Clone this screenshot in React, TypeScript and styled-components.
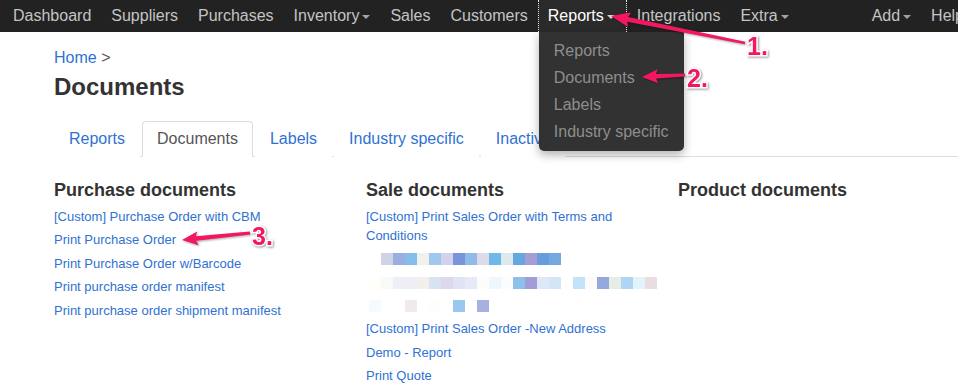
import React from 'react';
import styled, { createGlobalStyle } from 'styled-components';

const GlobalStyle = createGlobalStyle`
  html, body {
    margin: 0;
    padding: 0;
    background: #fff;
    overflow: hidden;
  }
  body {
    font-family: "Liberation Sans", Arial, sans-serif;
    color: #333;
  }
  #root {
    position: relative;
    width: 958px;
    height: 389px;
    overflow: hidden;
  }
`;

const LINK = '#2f72d2';
const PINK = '#f2175f';

type Pt = [number, number];

// tapered annotation arrow: wide near the head, thin at the tail
const arrowPoints = (
  tip: Pt,
  tail: Pt,
  headLen: number,
  headHalf: number,
  shaftHead: number,
  shaftTail: number,
) => {
  const dx = tail[0] - tip[0];
  const dy = tail[1] - tip[1];
  const len = Math.sqrt(dx * dx + dy * dy);
  const ux = dx / len;
  const uy = dy / len;
  const nx = -uy;
  const ny = ux;
  const bx = tip[0] + ux * headLen;
  const by = tip[1] + uy * headLen;
  const pts: Pt[] = [
    tip,
    [bx + ux * 2 + nx * headHalf, by + uy * 2 + ny * headHalf],
    [bx + nx * (shaftHead / 2), by + ny * (shaftHead / 2)],
    [tail[0] + nx * (shaftTail / 2), tail[1] + ny * (shaftTail / 2)],
    [tail[0] - nx * (shaftTail / 2), tail[1] - ny * (shaftTail / 2)],
    [bx - nx * (shaftHead / 2), by - ny * (shaftHead / 2)],
    [bx + ux * 2 - nx * headHalf, by + uy * 2 - ny * headHalf],
  ];
  return pts.map((p) => `${p[0].toFixed(1)},${p[1].toFixed(1)}`).join(' ');
};

const leftNav = [
  { label: 'Dashboard' },
  { label: 'Suppliers' },
  { label: 'Purchases' },
  { label: 'Inventory', caret: true },
  { label: 'Sales' },
  { label: 'Customers' },
  { label: 'Reports', caret: true, active: true },
  { label: 'Integrations' },
  { label: 'Extra', caret: true },
];

const rightNav = [
  { label: 'Add', caret: true },
  { label: 'Help' },
];

const reportMenu = ['Reports', 'Documents', 'Labels', 'Industry specific'];

const tabs = ['Reports', 'Documents', 'Labels', 'Industry specific', 'Inactive'];

const purchaseDocs = [
  '[Custom] Purchase Order with CBM',
  'Print Purchase Order',
  'Print Purchase Order w/Barcode',
  'Print purchase order manifest',
  'Print purchase order shipment manifest',
];

// pixelated (redacted) entries in the sale list
const blurRows: string[][] = [
  ['transparent', '#d0d3e6', '#9aaee2', '#84bde9', '#f1f0ea', '#a0c8ee', '#d2d2ee', '#7895d9', '#90bbe9', '#dcdce9', '#6fb8ea', '#dde9ec', '#64a8e3', '#a89cd5', '#679ddd', '#76a7df'],
  ['#fffef8', '#f8faf8', '#eeeef8', '#efedf6', '#f1f0ea', '#d7e2f3', '#dfd8ea', '#e0e3f3', '#e5eaf6', '#fcfcfa', '#eef7fb', '#fafcfe', '#8dc1ec', '#a49cd6', '#dfe8f6', '#d3e6f5', 'transparent', '#c3e3f8', '#fff9f9', '#95a8dc', '#e6ece6', '#acd6f4', '#e3f3fb', '#eadde1'],
  ['#f5faff', 'transparent', 'transparent', '#f0eaee', 'transparent', '#fcfefe', 'transparent', '#9ac6f2', 'transparent', '#a8b0e2'],
];

const App: React.FC = () => {
  return (
    <>
      <GlobalStyle />
      <Navbar>
        <NavInner>
          {leftNav.map((item) => (
            <NavItem key={item.label} $active={!!item.active}>
              {item.label}
              {item.caret && <Caret />}
              {item.active && (
                <DropMenu>
                  {reportMenu.map((m) => (
                    <DropItem key={m}>{m}</DropItem>
                  ))}
                </DropMenu>
              )}
            </NavItem>
          ))}
          <NavRight>
            {rightNav.map((item) => (
              <NavItem key={item.label} $active={false}>
                {item.label}
                {item.caret && <Caret />}
              </NavItem>
            ))}
          </NavRight>
        </NavInner>
      </Navbar>

      <Main>
        <Breadcrumb>
          <CrumbLink>Home</CrumbLink> &gt;
        </Breadcrumb>
        <Title>Documents</Title>

        <TabList>
          {tabs.map((t) => (
            <Tab key={t} $active={t === 'Documents'}>
              {t}
            </Tab>
          ))}
        </TabList>

        <Columns>
          <Column>
            <SectionTitle>Purchase documents</SectionTitle>
            <LinkList>
              {purchaseDocs.map((d) => (
                <DocLink key={d}>{d}</DocLink>
              ))}
            </LinkList>
          </Column>
          <Column>
            <SectionTitle>Sale documents</SectionTitle>
            <LinkList>
              <DocLink>[Custom] Print Sales Order with Terms and Conditions</DocLink>
              {blurRows.map((row, i) => (
                <MosaicRow key={i}>
                  {row.map((c, j) => (
                    <MosaicCell key={j} $color={c} />
                  ))}
                </MosaicRow>
              ))}
              <DocLink>[Custom] Print Sales Order -New Address</DocLink>
              <DocLink>Demo - Report</DocLink>
              <DocLink>Print Quote</DocLink>
            </LinkList>
          </Column>
          <Column>
            <SectionTitle>Product documents</SectionTitle>
          </Column>
        </Columns>
      </Main>

      <Overlay width="958" height="389" viewBox="0 0 958 389">
        <g fill={PINK} style={{ filter: 'drop-shadow(1px 1px 1px rgba(0,0,0,0.35))' }}>
          <polygon points={arrowPoints([611, 16], [745, 43], 17, 7.5, 5, 2.5)} />
          <polygon points={arrowPoints([642, 77], [685, 75], 14, 7, 4.5, 3)} />
          <polygon points={arrowPoints([182, 240], [250, 233], 14, 7, 4.5, 3)} />
        </g>
        <Marker x="747" y="55">1.</Marker>
        <Marker x="687" y="87">2.</Marker>
        <Marker x="252" y="245">3.</Marker>
      </Overlay>
    </>
  );
};

const Navbar = styled.nav`
  height: 32px;
  background: #222;
  position: relative;
  z-index: 5;
`;

const NavInner = styled.div`
  display: flex;
  width: 974px;
  height: 32px;
  padding-left: 3px;
  box-sizing: border-box;
`;

const NavRight = styled.div`
  display: flex;
  margin-left: auto;
`;

const NavItem = styled.div<{ $active: boolean }>`
  position: relative;
  display: flex;
  align-items: center;
  height: 32px;
  font-size: 16px;
  line-height: 32px;
  white-space: nowrap;
  color: ${(p) => (p.$active ? '#fff' : '#c4c4c4')};
  background: ${(p) => (p.$active ? '#2a2a2a' : 'transparent')};
  border-left: ${(p) => (p.$active ? '1px dotted #e8e8e8' : 'none')};
  border-right: ${(p) => (p.$active ? '1px dotted #e8e8e8' : 'none')};
  padding: ${(p) => (p.$active ? '0 11px 0 9px' : '0 10px')};
`;

const Caret = styled.span`
  display: inline-block;
  width: 0;
  height: 0;
  margin-left: 3px;
  margin-top: 1px;
  border-top: 4px solid currentColor;
  border-left: 4px solid transparent;
  border-right: 4px solid transparent;
  opacity: 0.8;
`;

const DropMenu = styled.div`
  position: absolute;
  top: 32px;
  left: 0;
  width: 145px;
  padding: 5px 0 6px;
  background: #323232;
  border-radius: 0 0 5px 5px;
  box-shadow: 0 4px 10px rgba(0, 0, 0, 0.3);
`;

const DropItem = styled.div`
  padding: 0 15px;
  line-height: 27px;
  font-size: 16px;
  color: #8e8e8e;
`;

const Main = styled.main`
  padding: 15px 0 0 54px;
`;

const Breadcrumb = styled.div`
  font-size: 16px;
  line-height: 22px;
  color: #555;
`;

const CrumbLink = styled.a`
  color: ${LINK};
  text-decoration: none;
`;

const Title = styled.h1`
  margin: 5px 0 0;
  font-size: 24px;
  line-height: 26px;
  font-weight: bold;
  color: #333;
`;

const TabList = styled.div`
  display: flex;
  margin-top: 21px;
  border-bottom: 1px solid #ddd;
`;

const Tab = styled.a<{ $active: boolean }>`
  display: block;
  margin-right: 2px;
  margin-bottom: -1px;
  padding: 6px 14px;
  font-size: 16px;
  line-height: 22px;
  white-space: nowrap;
  text-decoration: none;
  color: ${(p) => (p.$active ? '#555' : LINK)};
  background: #fff;
  border: 1px solid ${(p) => (p.$active ? '#ddd' : 'transparent')};
  border-bottom-color: transparent;
  border-radius: 4px 4px 0 0;
`;

const Columns = styled.div`
  display: grid;
  grid-template-columns: 312px 312px 1fr;
  margin-top: 23px;
`;

const Column = styled.section`
  padding-right: 30px;
`;

const SectionTitle = styled.h3`
  margin: 0 0 8px;
  font-size: 18px;
  line-height: 20px;
  font-weight: bold;
  color: #333;
`;

const LinkList = styled.div`
  display: flex;
  flex-direction: column;
  align-items: flex-start;
  gap: 4.8px;
`;

const DocLink = styled.a`
  font-size: 13px;
  line-height: 18.6px;
  color: ${LINK};
  text-decoration: none;
`;

const MosaicRow = styled.div`
  display: flex;
  align-items: center;
  height: 18.6px;
  padding-left: 3px;
`;

const MosaicCell = styled.span<{ $color: string }>`
  width: 12px;
  height: 12px;
  background: ${(p) => p.$color};
`;

const Overlay = styled.svg`
  position: absolute;
  top: 0;
  left: 0;
  pointer-events: none;
  z-index: 10;
`;

const Marker = styled.text`
  font-family: "Liberation Sans", Arial, sans-serif;
  font-size: 25px;
  font-weight: bold;
  fill: ${PINK};
  stroke: #fff;
  stroke-width: 3px;
  paint-order: stroke;
  filter: drop-shadow(1px 1px 1px rgba(0, 0, 0, 0.4));
`;

export default App;
